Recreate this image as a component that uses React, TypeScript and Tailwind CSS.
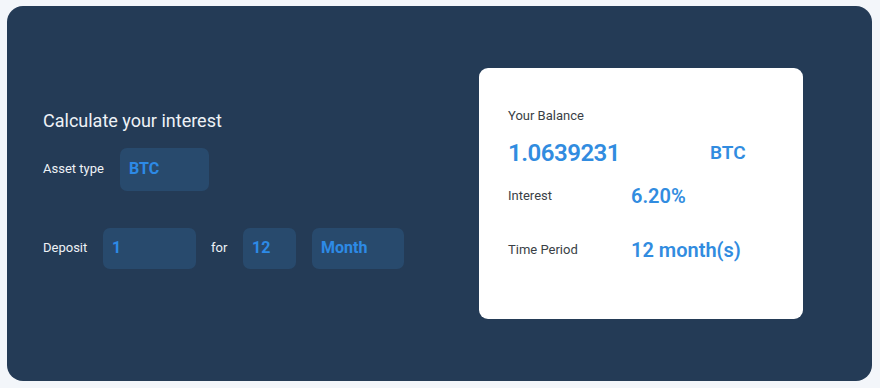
import React from 'react';

const font = { fontFamily: 'Roboto, "Noto Sans", sans-serif' };

function Field({ value, width }: { value: string; width: string }) {
  return (
    <div className={`${width} h-full rounded-[7px] bg-[#284a6d] flex items-center pl-[9px] text-[16px] font-bold text-[#2d8ae6]`}>
      {value}
    </div>
  );
}

export default function App() {
  return (
    <div className="w-[880px] h-[388px] bg-[#f3f6fa] pt-[6px] pl-[7px]" style={font}>
      <div className="w-[865px] h-[375px] rounded-[16px] bg-[#243b56] flex items-center">
        {/* calculator form */}
        <div className="w-[472px] pl-[36px] mb-[12px] flex flex-col">
          <h2 className="h-[28px] leading-[28px] text-[18px] text-[#eef2f6] font-normal">Calculate your interest</h2>
          <div className="mt-[13px] h-[43px] flex items-center">
            <span className="w-[77px] text-[13px] text-[#eef2f6]">Asset type</span>
            <Field value="BTC" width="w-[89px]" />
          </div>
          <div className="mt-[37px] h-[41px] flex items-center">
            <span className="w-[60px] text-[13px] text-[#eef2f6]">Deposit</span>
            <Field value="1" width="w-[93px]" />
            <span className="w-[47px] pl-[15px] text-[13px] text-[#eef2f6]">for</span>
            <Field value="12" width="w-[53px]" />
            <div className="w-[16px]" />
            <Field value="Month" width="w-[92px]" />
          </div>
        </div>

        {/* result card */}
        <div className="w-[324px] h-[251px] rounded-[9px] bg-white pl-[29px] pt-[38px] flex flex-col">
          <div className="h-[20px] flex items-center text-[13px] text-[#3a3f46]">Your Balance</div>
          <div className="mt-[11px] h-[32px] flex items-center text-[#318ce0] font-semibold">
            <span className="w-[202px] text-[24px] tracking-[-0.5px]">1.0639231</span>
            <span className="text-[19px]">BTC</span>
          </div>
          <div className="mt-[12px] h-[30px] flex items-center">
            <span className="w-[123px] text-[13px] text-[#3a3f46]">Interest</span>
            <span className="text-[20px] font-semibold text-[#318ce0]">6.20%</span>
          </div>
          <div className="mt-[24px] h-[30px] flex items-center">
            <span className="w-[123px] text-[13px] text-[#3a3f46]">Time Period</span>
            <span className="text-[20px] font-semibold text-[#318ce0]">12 month(s)</span>
          </div>
        </div>
      </div>
    </div>
  );
}
